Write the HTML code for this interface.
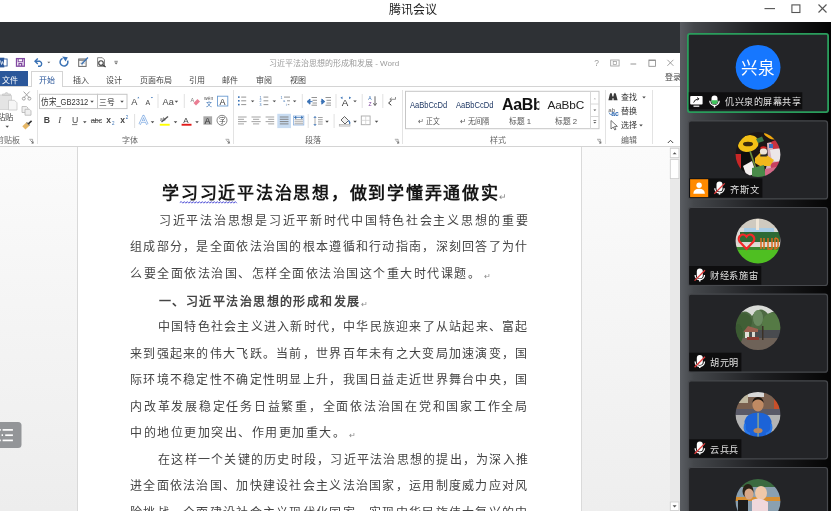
<!DOCTYPE html>
<html lang="zh-CN"><head><meta charset="utf-8">
<style>
*{margin:0;padding:0;box-sizing:border-box}
html,body{width:831px;height:511px;overflow:hidden;background:#fff;font-family:"Liberation Sans",sans-serif}
.a{position:absolute}
.t{position:absolute;white-space:nowrap;line-height:1}
svg{position:absolute;overflow:visible}
#panel{left:680px;top:22px;width:151px;height:489px;background:linear-gradient(90deg,#5a5d62 0px,#44474b 14px,#202124 75px,#050505 151px)}
.tab{font-size:8px;color:#444;top:76.5px}
.gl{font-size:8px;color:#666;top:137.2px}
.sep{position:absolute;width:1px;background:#e3e3e3}
.dd{position:absolute;width:0;height:0;border-left:2px solid transparent;border-right:2px solid transparent;border-top:2px solid #666}
.doc{position:absolute;white-space:nowrap;line-height:1;font-size:12px;color:#444}
.pil{font-size:8px;color:#888;margin-left:3px;vertical-align:-1px;letter-spacing:0}
.doc,.t,svg{will-change:transform}
</style></head><body>
<!-- Tencent title bar -->
<div class="t" style="left:389px;top:4px;font-size:12px;color:#1a1a1a">腾讯会议</div>
<svg style="left:760px;top:0" width="71" height="22">
  <line x1="4.5" y1="8.6" x2="15" y2="8.6" stroke="#555" stroke-width="1.1"/>
  <rect x="31.9" y="4.9" width="8" height="7.6" fill="none" stroke="#555" stroke-width="1.1"/>
  <line x1="58.5" y1="4.5" x2="66.5" y2="12.5" stroke="#555" stroke-width="1.1"/>
  <line x1="66.5" y1="4.5" x2="58.5" y2="12.5" stroke="#555" stroke-width="1.1"/>
</svg>
<div class="a" style="left:0;top:22px;width:680px;height:31px;background:#2e3135"></div>

<!-- ===== WORD ===== -->
<!-- QAT+RIBBON -->
<svg style="left:0;top:0" width="680" height="147" viewBox="0 0 680 147">
<g font-family="Liberation Sans">
<!-- ===== QAT ===== -->
  <!-- word logo partial -->
  <rect x="-2" y="57.7" width="6.3" height="9.7" fill="#2b579a"/>
  <rect x="3.5" y="59" width="3.6" height="7" fill="#fff" stroke="#2b579a" stroke-width="0.9"/>
  <path d="M0.5 60.5 L1.5 64.5 L2.5 61.5 L3.5 64.5" fill="none" stroke="#fff" stroke-width="0.7"/>
  <!-- save -->
  <rect x="16.5" y="58.6" width="7.8" height="7.6" fill="none" stroke="#8048a0" stroke-width="1.3"/>
  <rect x="18.2" y="58.6" width="4.4" height="3.2" fill="none" stroke="#8048a0" stroke-width="1"/>
  <rect x="18.4" y="63" width="4" height="3" fill="#8048a0"/>
  <rect x="19.6" y="64" width="1.2" height="1.6" fill="#fff"/>
  <!-- undo -->
  <path d="M35.3 61.3 H40 A2.7 2.7 0 0 1 40 66.3 H38" fill="none" stroke="#3a72b5" stroke-width="1.4"/>
  <path d="M37.8 58.4 L35 61.3 L37.8 64" fill="none" stroke="#3a72b5" stroke-width="1.4"/>
  <path d="M47.3 61.7 L50.3 61.7 L48.8 63.2Z" fill="#666"/>
  <!-- redo circular -->
  <path d="M67.6 60.6 A3.9 3.9 0 1 1 62.6 58.4" fill="none" stroke="#3a72b5" stroke-width="1.5"/>
  <path d="M62.2 56.6 L67.8 57.2 L65.6 61.6Z" fill="#3a72b5"/>
  <!-- edit -->
  <rect x="78.7" y="59" width="7.4" height="7.4" fill="none" stroke="#666" stroke-width="1"/>
  <line x1="78.7" y1="60.2" x2="86.1" y2="60.2" stroke="#666" stroke-width="1"/>
  <line x1="80" y1="63.2" x2="85" y2="63.2" stroke="#aaa" stroke-width="0.6"/>
  <line x1="82.2" y1="61" x2="82.2" y2="66" stroke="#aaa" stroke-width="0.6"/>
  <path d="M81.5 64.2 L87.9 57.5" stroke="#3a72b5" stroke-width="1.3"/>
  <!-- print preview -->
  <path d="M97.6 57.7 H102.3 L104.5 59.9 V66.4 H97.6Z" fill="none" stroke="#777" stroke-width="0.9"/>
  <circle cx="101" cy="63.1" r="2.3" fill="#fff" stroke="#444" stroke-width="1.1"/>
  <line x1="102.6" y1="64.8" x2="105.6" y2="67" stroke="#444" stroke-width="1.3"/>
  <!-- customize -->
  <line x1="114.4" y1="61.3" x2="117.8" y2="61.3" stroke="#666" stroke-width="0.8"/>
  <path d="M114.4 62.6 L117.8 62.6 L116.1 64.6Z" fill="#666"/>

<!-- ===== CLIPBOARD ===== -->
  <rect x="-2" y="95" width="13.5" height="14.5" rx="1" fill="#e4e4e4" stroke="#cfcfcf" stroke-width="0.8"/>
  <path d="M2.5 95.5 V94 H5 A1.5 1.5 0 0 1 8 94 H10.5 V95.5Z" fill="#d9d9d9" stroke="#c4c4c4" stroke-width="0.7"/>
  <path d="M8.5 100.3 H14.5 L17 102.8 V110 H8.5Z" fill="#f6f6f6" stroke="#c8c8c8" stroke-width="0.8"/>
  <text x="-3" y="120.4" font-size="8.3" fill="#444">粘贴</text>
  <path d="M5.45 125.80 L8.95 125.80 L7.20 127.75Z" fill="#4a4a4a"/>
  <!-- scissors -->
  <path d="M23.6 91.6 L29.6 98 M29.6 91.6 L23.6 98" stroke="#9a9a9a" stroke-width="0.9"/>
  <circle cx="23.8" cy="98.6" r="1.5" fill="none" stroke="#9a9a9a" stroke-width="0.9"/>
  <circle cx="29.4" cy="98.6" r="1.5" fill="none" stroke="#9a9a9a" stroke-width="0.9"/>
  <!-- copy -->
  <path d="M22 106.5 H26.5 L28 108 V112.5 H22Z" fill="#efefef" stroke="#b5b5b5" stroke-width="0.8"/>
  <path d="M25 109.3 H29.5 L31 110.8 V115.2 H25Z" fill="#efefef" stroke="#b5b5b5" stroke-width="0.8"/>
  <!-- format painter -->
  <path d="M22.3 126.3 L26.6 122.3 L29.7 125.4 L25.4 129.5Z" fill="#e6b766"/>
  <path d="M26.6 122.3 L29.7 125.4" stroke="#777" stroke-width="1.2"/>
  <path d="M28.3 123.8 L31.6 120.8" stroke="#333" stroke-width="1.6"/>
  <!-- launcher -->
  <path d="M29.3 139.3 H32.6 V142.6" fill="none" stroke="#888" stroke-width="0.7"/>
  <path d="M30.4 140.4 L33.2 143.2 M31.5 143.2 H33.2 V141.5" fill="none" stroke="#666" stroke-width="0.8"/>

<!-- ===== FONT ===== -->
  <rect x="39.5" y="94.3" width="58" height="14.3" fill="#fff" stroke="#c6c6c6" stroke-width="1"/>
  <rect x="97.5" y="94.3" width="29.5" height="14.3" fill="#fff" stroke="#c6c6c6" stroke-width="1"/>
  <text x="41.3" y="104.9" font-size="9" fill="#333" textLength="47" lengthAdjust="spacingAndGlyphs">仿宋_GB2312</text>
  <path d="M90.25 100.80 L93.75 100.80 L92.00 102.75Z" fill="#4a4a4a"/>
  <text x="99" y="105" font-size="8" fill="#222" textLength="15.5" lengthAdjust="spacingAndGlyphs">三号</text>
  <path d="M120.25 100.80 L123.75 100.80 L122.00 102.75Z" fill="#4a4a4a"/>
  <text x="131.2" y="104.7" font-size="9.2" fill="#444">A</text>
  <path d="M137.4 98.3 L139.3 98.3 L138.35 96.8Z" fill="#3a72b5"/>
  <text x="145.6" y="104.7" font-size="7" fill="#444">A</text>
  <path d="M150.8 96.9 L153 96.9 L151.9 98.3Z" fill="#3a72b5"/>
  <line x1="158" y1="94" x2="158" y2="108" stroke="#e1e1e1"/>
  <text x="162.6" y="104.7" font-size="9.2" fill="#444">Aa</text>
  <path d="M174.65 100.80 L178.15 100.80 L176.40 102.75Z" fill="#4a4a4a"/>
  <line x1="184.3" y1="94" x2="184.3" y2="108" stroke="#e1e1e1"/>
  <text x="190.5" y="101.5" font-size="5.5" fill="#777">A</text>
  <path d="M193.5 103 L197.5 99 L200 101.5 L196 105.5Z" fill="#ea7d93"/>
  <text x="204" y="100" font-size="5" fill="#555">wén</text>
  <text x="205.5" y="106" font-size="6" fill="#3a72b5">文</text>
  <rect x="217.5" y="96.2" width="10.3" height="9.8" fill="#fff" stroke="#6b9bd1" stroke-width="0.9"/>
  <text x="219.6" y="104.6" font-size="9" fill="#333">A</text>
  <!-- row2 -->
  <text x="43.8" y="123.3" font-size="8.7" font-weight="bold" fill="#444">B</text>
  <text x="58.3" y="123.3" font-size="8.7" font-style="italic" fill="#444" font-family="Liberation Serif">I</text>
  <text x="72" y="123.3" font-size="8.7" fill="#444">U</text>
  <line x1="72" y1="124.6" x2="77.3" y2="124.6" stroke="#555" stroke-width="0.8"/>
  <path d="M83.05 121.20 L86.55 121.20 L84.80 123.15Z" fill="#4a4a4a"/>
  <text x="90.8" y="123.3" font-size="7.6" fill="#444" letter-spacing="-0.4">abc</text>
  <line x1="90.8" y1="120.5" x2="101" y2="120.5" stroke="#444" stroke-width="0.6"/>
  <text x="106.3" y="123.3" font-size="8.5" font-weight="bold" fill="#444">x</text>
  <text x="112" y="125" font-size="4.5" fill="#3a72b5">2</text>
  <text x="120.2" y="123.3" font-size="8.5" font-weight="bold" fill="#444">x</text>
  <text x="125.8" y="119" font-size="4.5" fill="#3a72b5">2</text>
  <line x1="134.6" y1="114" x2="134.6" y2="128" stroke="#e1e1e1"/>
  <path d="M139.6 124.6 L143.5 116 L147.4 124.6 M141.2 121.6 H145.8" fill="none" stroke="#8db4e6" stroke-width="2.4" stroke-linejoin="round"/>
  <path d="M139.6 124.6 L143.5 116 L147.4 124.6 M141.2 121.6 H145.8" fill="none" stroke="#fff" stroke-width="0.9" stroke-linejoin="round"/>
  <path d="M150.75 121.20 L154.25 121.20 L152.50 123.15Z" fill="#4a4a4a"/>
  <path d="M161.5 122 L168 116.5" stroke="#555" stroke-width="1.3"/>
  <text x="160" y="121" font-size="5" fill="#555">ab</text>
  <rect x="159.8" y="123.8" width="9.9" height="1.9" fill="#ffff00"/>
  <path d="M173.75 121.20 L177.25 121.20 L175.50 123.15Z" fill="#4a4a4a"/>
  <text x="183.2" y="122.8" font-size="8" fill="#444">A</text>
  <rect x="181.6" y="123.8" width="9.9" height="1.9" fill="#e21a1a"/>
  <path d="M195.25 121.20 L198.75 121.20 L197.00 123.15Z" fill="#4a4a4a"/>
  <rect x="203.4" y="116.3" width="8.7" height="8.4" fill="#a8a8a8"/>
  <text x="204.5" y="124" font-size="9" fill="#333">A</text>
  <circle cx="222" cy="120.3" r="5" fill="#fff" stroke="#666" stroke-width="0.8"/>
  <text x="218.8" y="123.4" font-size="6.5" fill="#444">字</text>
  <path d="M225.5 139.3 H228.8 V142.6" fill="none" stroke="#888" stroke-width="0.7"/>
  <path d="M226.6 140.4 L229.4 143.2 M227.7 143.2 H229.4 V141.5" fill="none" stroke="#666" stroke-width="0.8"/>

<!-- ===== PARAGRAPH ===== -->
  <g fill="#3a72b5">
    <rect x="238" y="96.3" width="1.6" height="1.6"/><rect x="238" y="100" width="1.6" height="1.6"/><rect x="238" y="103.8" width="1.6" height="1.6"/>
  </g>
  <g stroke="#888" stroke-width="0.9">
    <line x1="241.2" y1="97.1" x2="246.2" y2="97.1"/><line x1="241.2" y1="100.8" x2="246.2" y2="100.8"/><line x1="241.2" y1="104.6" x2="246.2" y2="104.6"/>
    <line x1="263.5" y1="97.1" x2="268.3" y2="97.1"/><line x1="263.5" y1="100.8" x2="268.3" y2="100.8"/><line x1="263.5" y1="104.6" x2="268.3" y2="104.6"/>
    <line x1="284" y1="97.1" x2="290" y2="97.1"/><line x1="287" y1="100.8" x2="290" y2="100.8"/><line x1="287.8" y1="104.6" x2="289.3" y2="104.6"/>
  </g>
  <g fill="#3a72b5" font-size="3.6">
    <text x="259.4" y="98.6">1</text><text x="259.4" y="102.3">2</text><text x="259.4" y="106.1">3</text>
    <text x="280.5" y="98.6">1</text><text x="283.2" y="102.3">a</text><text x="285.8" y="106.1">i</text>
  </g>
  <path d="M250.85 100.40 L254.35 100.40 L252.60 102.35Z" fill="#4a4a4a"/>
  <path d="M272.55 100.40 L276.05 100.40 L274.30 102.35Z" fill="#4a4a4a"/>
  <path d="M292.85 100.40 L296.35 100.40 L294.60 102.35Z" fill="#4a4a4a"/>
  <line x1="302.3" y1="94" x2="302.3" y2="108" stroke="#e1e1e1"/>
  <!-- indents -->
  <g stroke="#888" stroke-width="0.9">
    <line x1="311.5" y1="97.5" x2="317" y2="97.5"/><line x1="312.5" y1="100.3" x2="317" y2="100.3"/><line x1="312.5" y1="103" x2="317" y2="103"/><line x1="311.5" y1="105.2" x2="317" y2="105.2"/>
    <line x1="325.5" y1="97.5" x2="331" y2="97.5"/><line x1="326.5" y1="100.3" x2="331" y2="100.3"/><line x1="326.5" y1="103" x2="331" y2="103"/><line x1="325.5" y1="105.2" x2="331" y2="105.2"/>
  </g>
  <path d="M307 101.6 L310 99 V104.2Z M309.5 101.6 H312.5" fill="#3a72b5" stroke="#3a72b5" stroke-width="0.9"/>
  <path d="M324.8 101.6 L321.8 99 V104.2Z M320.8 101.6 H323" fill="#3a72b5" stroke="#3a72b5" stroke-width="0.9"/>
  <line x1="336" y1="94" x2="336" y2="108" stroke="#e1e1e1"/>
  <text x="341.8" y="105.5" font-size="9.8" fill="#333">A</text>
  <path d="M340.4 97.8 L342.5 96.4 V99.2Z M351.2 97.8 L349.1 96.4 V99.2Z" fill="#3a72b5"/>
  <path d="M353.25 100.40 L356.75 100.40 L355.00 102.35Z" fill="#4a4a4a"/>
  <line x1="362.2" y1="94" x2="362.2" y2="108" stroke="#e1e1e1"/>
  <text x="368.2" y="100.4" font-size="5" fill="#3a72b5">A</text>
  <text x="368.4" y="105.8" font-size="5" fill="#8048a0">Z</text>
  <path d="M375 96.3 V105" stroke="#555" stroke-width="0.9"/>
  <path d="M373.4 103.2 L375 105.6 L376.6 103.2" fill="none" stroke="#555" stroke-width="0.9"/>
  <line x1="382.8" y1="94" x2="382.8" y2="108" stroke="#e1e1e1"/>
  <path d="M395.5 97 V99.3 H390" fill="none" stroke="#777" stroke-width="0.8"/>
  <path d="M391.8 97.6 L389.8 99.3 L391.8 101" fill="none" stroke="#777" stroke-width="0.8"/>
  <path d="M388.6 103 L391.3 100.5 M388.6 103 L391.3 105.3" fill="none" stroke="#333" stroke-width="1"/>
  <!-- row2 align -->
  <g stroke="#9a9a9a" stroke-width="0.9">
    <line x1="238" y1="117" x2="246.6" y2="117"/><line x1="238" y1="119.3" x2="244" y2="119.3"/><line x1="238" y1="121.6" x2="246.6" y2="121.6"/><line x1="238" y1="123.9" x2="244" y2="123.9"/>
    <line x1="251.5" y1="117" x2="260.7" y2="117"/><line x1="253" y1="119.3" x2="259.2" y2="119.3"/><line x1="251.5" y1="121.6" x2="260.7" y2="121.6"/><line x1="253" y1="123.9" x2="259.2" y2="123.9"/>
    <line x1="265.6" y1="117" x2="274.2" y2="117"/><line x1="268.2" y1="119.3" x2="274.2" y2="119.3"/><line x1="265.6" y1="121.6" x2="274.2" y2="121.6"/><line x1="268.2" y1="123.9" x2="274.2" y2="123.9"/>
  </g>
  <rect x="277.3" y="113.8" width="13.7" height="14.3" fill="#c8dcf2"/>
  <g stroke="#7a7a7a" stroke-width="0.9">
    <line x1="279.8" y1="117" x2="288.5" y2="117"/><line x1="279.8" y1="119.3" x2="288.5" y2="119.3"/><line x1="279.8" y1="121.6" x2="288.5" y2="121.6"/><line x1="279.8" y1="123.9" x2="288.5" y2="123.9"/>
  </g>
  <rect x="293.5" y="116" width="10.3" height="9" fill="none" stroke="#8ab0de" stroke-width="0.8"/>
  <g stroke="#999" stroke-width="0.9">
    <line x1="294.5" y1="119.8" x2="303" y2="119.8"/><line x1="294.5" y1="121.8" x2="303" y2="121.8"/><line x1="294.5" y1="123.8" x2="303" y2="123.8"/>
  </g>
  <path d="M294.5 117.5 H303 M294.5 117.5 L296 116.3 V118.7Z M303 117.5 L301.5 116.3 V118.7Z" fill="#3a72b5" stroke="#3a72b5" stroke-width="0.7"/>
  <line x1="308.2" y1="114" x2="308.2" y2="128" stroke="#e1e1e1"/>
  <!-- line spacing -->
  <path d="M315 117.5 V124.5" stroke="#999" stroke-width="0.8"/>
  <path d="M313.3 117.8 L315 115.9 L316.7 117.8Z M313.3 124.2 L315 126.1 L316.7 124.2Z" fill="#3a72b5"/>
  <g stroke="#999" stroke-width="0.9"><line x1="318" y1="117.5" x2="322.7" y2="117.5"/><line x1="318" y1="119.7" x2="322.7" y2="119.7"/><line x1="318" y1="121.9" x2="322.7" y2="121.9"/><line x1="318" y1="124.1" x2="322.7" y2="124.1"/></g>
  <path d="M325.25 120.80 L328.75 120.80 L327.00 122.75Z" fill="#4a4a4a"/>
  <line x1="334.1" y1="114" x2="334.1" y2="128" stroke="#e1e1e1"/>
  <!-- shading -->
  <path d="M341 120 L344.5 116.5 L348.5 120.5 L345 124 Z" fill="#f2f2f2" stroke="#555" stroke-width="0.9"/>
  <path d="M348.5 120.5 Q350.5 122.5 349.5 124" fill="none" stroke="#3a72b5" stroke-width="1.2"/>
  <rect x="339.2" y="124.3" width="10.8" height="1.8" fill="#e8e8e8" stroke="#999" stroke-width="0.5"/>
  <path d="M353.25 120.80 L356.75 120.80 L355.00 122.75Z" fill="#4a4a4a"/>
  <rect x="361.3" y="116" width="8.8" height="8.7" fill="none" stroke="#aaa" stroke-width="0.9"/>
  <path d="M365.7 116 V124.7 M361.3 120.35 H370.1" stroke="#ccc" stroke-width="0.7"/>
  <path d="M374.75 120.80 L378.25 120.80 L376.50 122.75Z" fill="#4a4a4a"/>
  <path d="M394.8 139.3 H398.1 V142.6" fill="none" stroke="#888" stroke-width="0.7"/>
  <path d="M395.9 140.4 L398.7 143.2 M397 143.2 H398.7 V141.5" fill="none" stroke="#666" stroke-width="0.8"/>

<!-- ===== STYLES ===== -->
  <rect x="405.5" y="91.3" width="193.5" height="37.4" fill="#fff" stroke="#c6c6c6" stroke-width="1"/>
  <line x1="590.5" y1="91.3" x2="590.5" y2="128.7" stroke="#d8d8d8"/>
  <line x1="590.5" y1="104" x2="599" y2="104" stroke="#d8d8d8"/>
  <line x1="590.5" y1="116.5" x2="599" y2="116.5" stroke="#d8d8d8"/>
  <path d="M593.7 99.2 L596 99.2 L594.85 97.9Z" fill="#aaa"/>
  <path d="M593.4 109.5 L596.3 109.5 L594.85 111Z" fill="#555"/>
  <line x1="593.4" y1="120.5" x2="596.3" y2="120.5" stroke="#555" stroke-width="0.7"/>
  <path d="M593.4 122 L596.3 122 L594.85 123.5Z" fill="#555"/>
  <text x="410" y="107.7" font-size="8.6" fill="#1f3864" textLength="37.2" lengthAdjust="spacingAndGlyphs">AaBbCcDd</text>
  <text x="455.9" y="107.7" font-size="8.6" fill="#1f3864" textLength="37.5" lengthAdjust="spacingAndGlyphs">AaBbCcDd</text>
  <text x="502" y="109.5" font-size="16" font-weight="bold" fill="#111" letter-spacing="-0.3">AaBb</text>
  <rect x="539.3" y="95" width="6" height="16" fill="#fff"/>
  <text x="547.6" y="109.3" font-size="11.8" fill="#222" letter-spacing="-0.2">AaBbC</text>
  <text x="418" y="123.5" font-size="8" fill="#555" textLength="21.5" lengthAdjust="spacingAndGlyphs">↵ 正文</text>
  <text x="459.7" y="123.5" font-size="8" fill="#555" textLength="30" lengthAdjust="spacingAndGlyphs">↵ 无间隔</text>
  <text x="509" y="123.5" font-size="8" fill="#555" textLength="22" lengthAdjust="spacingAndGlyphs">标题 1</text>
  <text x="555" y="123.5" font-size="8" fill="#555" textLength="22" lengthAdjust="spacingAndGlyphs">标题 2</text>
  <path d="M597 139.3 H600.3 V142.6" fill="none" stroke="#888" stroke-width="0.7"/>
  <path d="M598.1 140.4 L600.9 143.2 M599.2 143.2 H600.9 V141.5" fill="none" stroke="#666" stroke-width="0.8"/>

<!-- ===== EDITING ===== -->
  <path d="M608.4 100.3 L609.6 95 L610.2 93.3 H611.8 L612.4 96.5 H613.4 L614 93.3 H615.6 L616.2 95 L617.6 100.3 H613.6 V98.2 H612.4 V100.3Z" fill="#3a3a3a"/>
  <text x="621" y="100.4" font-size="8" fill="#333">查找</text>
  <path d="M642.25 96.60 L645.75 96.60 L644.00 98.55Z" fill="#4a4a4a"/>
  <text x="608.2" y="111.5" font-size="6.2" fill="#555">ab</text>
  <text x="611.2" y="116" font-size="6.8" fill="#2f68b0" font-weight="bold">ac</text>
  <path d="M609 112.5 Q609.5 115 611.5 114.5" fill="none" stroke="#3a72b5" stroke-width="0.7"/>
  <text x="621" y="114.2" font-size="8" fill="#333">替换</text>
  <path d="M611 120.5 V129 L613.2 127 L614.8 130 L616 129.3 L614.5 126.5 L617.4 126.4Z" fill="#fff" stroke="#555" stroke-width="0.8"/>
  <text x="621" y="128.2" font-size="8" fill="#333">选择</text>
  <path d="M639.25 124.60 L642.75 124.60 L641.00 126.55Z" fill="#4a4a4a"/>
  <path d="M667.8 143 L670.5 140.3 L673.2 143" fill="none" stroke="#444" stroke-width="1"/>
</g>
</svg>

<div class="t" style="left:268.8px;top:59.5px;font-size:8px;color:#9a9a9a">习近平法治思想的形成和发展 - Word</div>
<!-- word window controls -->
<svg style="left:590px;top:55px" width="90" height="14">
  <text x="4.2" y="10.9" font-size="8.5" font-family="Liberation Sans" fill="#999">?</text>
  <rect x="20.7" y="5" width="8.4" height="6" fill="none" stroke="#999" stroke-width="0.8"/>
  <rect x="23.2" y="6.6" width="3.4" height="3" fill="none" stroke="#999" stroke-width="0.7"/>
  <line x1="40.5" y1="9" x2="46.2" y2="9" stroke="#888" stroke-width="0.9"/>
  <rect x="58.9" y="5" width="6.5" height="6.3" fill="none" stroke="#888" stroke-width="0.8"/>
  <line x1="58.9" y1="5.4" x2="65.4" y2="5.4" stroke="#888" stroke-width="0.9"/>
  <path d="M77.4 4.8 L83.4 10.8 M83.4 4.8 L77.4 10.8" stroke="#888" stroke-width="0.8"/>
</svg>
<div class="t" style="left:665px;top:73.8px;font-size:8px;color:#444">登录</div>

<!-- tabs -->
<div class="a" style="left:0;top:71px;width:28px;height:16px;background:#2b579a"></div>
<div class="t tab" style="left:2px;color:#fff">文件</div>
<div class="a" style="left:31px;top:71px;width:32px;height:16px;border:1px solid #d4d4d4;border-bottom:none;background:#fff"></div>
<div class="t tab" style="left:38.5px;color:#2b579a">开始</div>
<div class="t tab" style="left:72.5px">插入</div>
<div class="t tab" style="left:106px">设计</div>
<div class="t tab" style="left:140px">页面布局</div>
<div class="t tab" style="left:188.5px">引用</div>
<div class="t tab" style="left:222px">邮件</div>
<div class="t tab" style="left:256px">审阅</div>
<div class="t tab" style="left:290px">视图</div>
<div class="a" style="left:0;top:86px;width:31px;height:1px;background:#d4d4d4"></div>
<div class="a" style="left:63px;top:86px;width:617px;height:1px;background:#d4d4d4"></div>

<!-- ribbon bottom -->
<div class="a" style="left:0;top:146px;width:680px;height:1px;background:#d4d4d4"></div>
<div class="sep" style="left:37px;top:90px;height:54px"></div>
<div class="sep" style="left:232.5px;top:90px;height:54px"></div>
<div class="sep" style="left:402px;top:90px;height:54px"></div>
<div class="sep" style="left:604.5px;top:90px;height:54px"></div>
<div class="sep" style="left:651.5px;top:90px;height:54px"></div>
<div class="t gl" style="left:-4px">剪贴板</div>
<div class="t gl" style="left:121.5px">字体</div>
<div class="t gl" style="left:304.5px">段落</div>
<div class="t gl" style="left:490px">样式</div>
<div class="t gl" style="left:620.5px">编辑</div>

<!-- document area -->
<div class="a" style="left:0;top:147px;width:77px;height:364px;background:linear-gradient(180deg,#fbfbfb,#ededed)"></div>
<div class="a" style="left:77px;top:147px;width:1px;height:364px;background:#d9d9d9"></div>
<div class="a" style="left:581px;top:147px;width:89px;height:364px;background:linear-gradient(180deg,#fbfbfb,#eeeeee);border-left:1px solid #dadada"></div>
<div class="a" style="left:670px;top:147px;width:10px;height:364px;background:#e9e9e9"></div>
<svg style="left:0;top:0" width="680" height="511" viewBox="0 0 680 511">
  <rect x="670.3" y="148.3" width="8.6" height="9.3" fill="#fff" stroke="#cdcdcd" stroke-width="0.8"/>
  <path d="M672.6 154.3 L676.6 154.3 L674.6 152.2Z" fill="#555"/>
  <rect x="670.3" y="159.6" width="8.6" height="19" fill="#fff" stroke="#cdcdcd" stroke-width="0.8"/>
  <rect x="670.3" y="502" width="8.6" height="8.5" fill="#fff" stroke="#cdcdcd" stroke-width="0.8"/>
  <path d="M672.6 505.3 L676.6 505.3 L674.6 507.4Z" fill="#555"/>
  <rect x="-4" y="422" width="25.5" height="26" rx="3.5" fill="#939598"/>
  <g stroke="#fff" stroke-width="1.7">
    <line x1="2.6" y1="429.9" x2="12.9" y2="429.9"/><line x1="5.2" y1="435.2" x2="12.9" y2="435.2"/><line x1="2.6" y1="440.4" x2="12.9" y2="440.4"/>
    <line x1="-1" y1="429.9" x2="0.8" y2="429.9"/><line x1="1.6" y1="435.2" x2="3" y2="435.2"/><line x1="-1" y1="440.4" x2="0.8" y2="440.4"/>
  </g>
</svg>

<div class="doc" style="left:161.6px;top:185px;font-size:17px;font-weight:bold;color:#151515;letter-spacing:1.75px">学习习近平法治思想，做到学懂弄通做实<span class="pil" style="font-size:9px;font-weight:normal;letter-spacing:0;margin-left:-1px">↵</span></div>
<svg style="left:178px;top:200px" width="60" height="5"><path d="M1.8 2.5 L3.3 1.6 L4.8 3.2 L6.3 1.6 L7.8 3.2 L9.3 1.6 L10.8 3.2 L12.3 1.6 L13.8 3.2 L15.3 1.6 L16.8 3.2 L18.3 1.6 L19.8 3.2 L21.3 1.6 L22.8 3.2 L24.3 1.6 L25.8 3.2 L27.3 1.6 L28.8 3.2 L30.3 1.6 L31.8 3.2 L33.3 1.6 L34.8 3.2 L36.3 1.6 L37.8 3.2 L39.3 1.6 L40.8 3.2 L42.3 1.6 L43.8 3.2 L45.3 1.6 L46.8 3.2 L48.3 1.6 L49.8 3.2 L51.3 1.6 L52.8 3.2 L54.3 1.6 L55.8 3.2 L57.3 1.6 L58.8 3.2" fill="none" stroke="#4646d2" stroke-width="0.9"/></svg>
<div class="doc" style="left:159px;top:296.3px;font-weight:bold;color:#454545;letter-spacing:1.45px">一、习近平法治思想的形成和发展<span class="pil" style="margin-left:0;font-weight:normal">↵</span></div>
<!--DOC-->
<div class="doc" style="left:158.80px;top:214.90px;letter-spacing:1.723px">习近平法治思想是习近平新时代中国特色社会主义思想的重要</div>
<div class="doc" style="left:130.40px;top:241.40px;letter-spacing:1.283px">组成部分，是全面依法治国的根本遵循和行动指南，深刻回答了为什</div>
<div class="doc" style="left:130.40px;top:267.90px;letter-spacing:1.500px">么要全面依法治国、怎样全面依法治国这个重大时代课题。<span class="pil">↵</span></div>
<div class="doc" style="left:158.40px;top:321.00px;letter-spacing:1.230px">中国特色社会主义进入新时代，中华民族迎来了从站起来、富起</div>
<div class="doc" style="left:130.40px;top:347.50px;letter-spacing:1.283px">来到强起来的伟大飞跃。当前，世界百年未有之大变局加速演变，国</div>
<div class="doc" style="left:130.40px;top:374.00px;letter-spacing:1.283px">际环境不稳定性不确定性明显上升，我国日益走近世界舞台中央，国</div>
<div class="doc" style="left:130.40px;top:400.50px;letter-spacing:1.757px">内改革发展稳定任务日益繁重，全面依法治国在党和国家工作全局</div>
<div class="doc" style="left:130.40px;top:427.00px;letter-spacing:1.500px">中的地位更加突出、作用更加重大。<span class="pil">↵</span></div>
<div class="doc" style="left:157.80px;top:453.60px;letter-spacing:1.252px">在这样一个关键的历史时段，习近平法治思想的提出，为深入推</div>
<div class="doc" style="left:130.40px;top:480.10px;letter-spacing:1.283px">进全面依法治国、加快建设社会主义法治国家，运用制度威力应对风</div>
<div class="doc" style="left:130.40px;top:506.60px;letter-spacing:1.283px">险挑战，全面建设社会主义现代化国家，实现中华民族伟大复兴的中</div>
<!--/DOC-->

<!--PANEL-->
<!-- ===== RIGHT PANEL ===== -->
<div id="panel" class="a"></div>
<svg style="left:680px;top:22px" width="151" height="489" viewBox="680 22 151 489">
<defs>
  <filter id="blur" x="-10%" y="-10%" width="120%" height="120%"><feGaussianBlur stdDeviation="0.7"/></filter>
  <clipPath id="c2"><circle cx="758" cy="154.5" r="22.4"/></clipPath>
  <clipPath id="c3"><circle cx="758" cy="241" r="22.4"/></clipPath>
  <clipPath id="c4"><circle cx="758" cy="327.7" r="22.4"/></clipPath>
  <clipPath id="c5"><circle cx="758" cy="414.3" r="22.4"/></clipPath>
  <clipPath id="c6"><circle cx="758" cy="501.5" r="22.4"/></clipPath>
  <g id="mute">
    <path d="M-3 -3.6 A3 3 0 0 1 3 -3.6 V0.4 A3 3 0 0 1 -3 0.4Z" fill="#fff"/>
    <path d="M-4.7 0 A4.7 4.7 0 0 0 4.7 0" fill="none" stroke="#fff" stroke-width="1.3"/>
    <path d="M0 4.6 V6.4" stroke="#fff" stroke-width="1.5"/>
    <path d="M-5.2 5.6 L5.2 -4.8" stroke="#e03c3c" stroke-width="1.3"/>
  </g>
</defs>
<!-- tile1 -->
<rect x="687.9" y="33.9" width="140.2" height="78.2" rx="2" fill="#232427" stroke="#2a9d5c" stroke-width="1.8"/>
<circle cx="758.1" cy="67.3" r="22.4" fill="#1677ff"/>
<text x="758.1" y="74.1" font-size="16.5" fill="#fff" text-anchor="middle" font-family="Liberation Sans">兴泉</text>
<rect x="688.8" y="92.3" width="113.5" height="17" fill="#0e0e0f"/>
<rect x="690.2" y="96.1" width="12.4" height="8.4" rx="1" fill="#fff"/>
<path d="M693.5 106.2 H699.3" stroke="#fff" stroke-width="1.2"/>
<path d="M693.6 102.6 Q694.5 99.3 698.6 98.8 M697 97.6 L698.9 98.8 L697.4 100.4" fill="none" stroke="#222" stroke-width="1"/>
<path d="M711.5 98.4 A3 3 0 0 1 717.5 98.4 V101.2 A3 3 0 0 1 711.5 101.2Z" fill="#fff"/>
<path d="M711.5 100.2 H717.5 V101.2 A3 3 0 0 1 711.5 101.2Z" fill="#3ec25b"/>
<path d="M709.8 100.8 A4.7 4.7 0 0 0 719.2 100.8" fill="none" stroke="#fff" stroke-width="1.3"/>
<path d="M714.5 105.4 V107.6" stroke="#fff" stroke-width="1.5"/>
<text x="725" y="104.8" font-size="9.5" fill="#e4e4e4" font-family="Liberation Sans" textLength="76.5" lengthAdjust="spacingAndGlyphs">仉兴泉的屏幕共享</text>

<!-- tiles 2-6 frames -->
<rect x="688.5" y="120.9" width="139" height="78" rx="2.5" fill="#232427" stroke="#47494d" stroke-width="1.2"/>
<rect x="688.5" y="207.5" width="139" height="78" rx="2.5" fill="#232427" stroke="#47494d" stroke-width="1.2"/>
<rect x="688.5" y="294.2" width="139" height="78" rx="2.5" fill="#232427" stroke="#47494d" stroke-width="1.2"/>
<rect x="688.5" y="380.8" width="139" height="78" rx="2.5" fill="#232427" stroke="#47494d" stroke-width="1.2"/>
<rect x="688.5" y="467.5" width="139" height="78" rx="2.5" fill="#232427" stroke="#47494d" stroke-width="1.2"/>

<!-- avatar 2: sunflowers -->
<g clip-path="url(#c2)"><g filter="url(#blur)">
  <rect x="734" y="131" width="48" height="48" fill="#1e1616"/>
  <path d="M767 143 L782 140 L782 176 L764 176 L768 160Z" fill="#d8b4bc"/>
  <path d="M770 150 L782 148 L782 162 L772 161Z" fill="#ece6e8"/>
  <path d="M771 142 L782 137 L782 148 L773 149Z" fill="#c83040"/>
  <rect x="769" y="144" width="4" height="4" fill="#3a70c0"/>
  <path d="M770 163 L782 161 L782 172 L772 173Z" fill="#c84060"/>
  <rect x="734" y="154" width="7" height="15" fill="#c82828"/>
  <rect x="741" y="152" width="9" height="19" fill="#100c0c"/>
  <path d="M738 146 Q739 136 750 135 Q760 136 758 146 Q754 152 746 152 Q739 151 738 146Z" fill="#f2c014"/>
  <ellipse cx="748" cy="144" rx="5" ry="2.3" fill="#3a2a0a"/>
  <ellipse cx="770" cy="136" rx="6.5" ry="2.4" fill="#f0a810" transform="rotate(25 770 136)"/>
  <path d="M755 158 L760 153 L768 156 L774 160 L770 166 L760 166 L755 163Z" fill="#f2b81a"/>
  <circle cx="763.5" cy="151.5" r="3.6" fill="#ede4d8"/>
  <path d="M759.8 148.5 A3.8 3 0 0 1 767.2 148.5Z" fill="#d82020"/>
  <rect x="760.3" y="154.5" width="6.5" height="2" fill="#2a2a2a"/>
  <path d="M750 151 L756 169" stroke="#6a9040" stroke-width="1.6"/>
  <path d="M756 139 L762 136.5 L764 141 L758 143Z" fill="#3d7a4a"/>
  <path d="M743 166 L752 161 L756 173 L747 177Z" fill="#f4f0f0"/>
  <path d="M752 168 L764 165 L766 179 L752 179Z" fill="#4a8a48"/>
  <path d="M765 169 L776 167 L778 179 L765 179Z" fill="#d46a88"/>
</g></g>

<!-- avatar 3: campus with heart -->
<g clip-path="url(#c3)"><g filter="url(#blur)">
  <rect x="735" y="218" width="46" height="46" fill="#d9d9d4"/>
  <rect x="735" y="218" width="46" height="10" fill="#cfcac0"/>
  <rect x="744" y="228" width="30" height="6" fill="#a8cde8"/>
  <rect x="756" y="219" width="3" height="11" fill="#efe6d8"/>
  <rect x="740" y="232" width="40" height="10" fill="#2f6a35"/>
  <rect x="735" y="244" width="46" height="5" fill="#e2ddd5"/>
  <rect x="735" y="249" width="46" height="16" fill="#4fbf24"/>
  <rect x="735" y="247" width="46" height="3" fill="#3c8a30"/>
  <path d="M746.5 249 L739.5 241.5 A3.8 3.8 0 0 1 746.5 236.5 A3.8 3.8 0 0 1 753.5 241.5Z" fill="none" stroke="#f22a2a" stroke-width="2.2"/>
  <path d="M761 238 V249 M764 238 V249 M768 238 V249 H772 M772 238 V249 M775 238 V249 Q779 248 778 243 Q779 238 775 238" fill="none" stroke="#d96a1c" stroke-width="1.5"/>
</g></g>

<!-- avatar 4: trees/house -->
<g clip-path="url(#c4)"><g filter="url(#blur)">
  <rect x="734" y="304" width="48" height="48" fill="#4a5a44"/>
  <rect x="734" y="304" width="48" height="14" fill="#dadcd8"/>
  <path d="M734 318 Q745 306 752 316 Q760 304 768 314 Q776 308 782 316 V352 H734Z" fill="#4d6a42"/>
  <ellipse cx="744" cy="322" rx="8" ry="9" fill="#3f5e36"/>
  <ellipse cx="772" cy="324" rx="10" ry="11" fill="#557a45"/>
  <ellipse cx="758" cy="318" rx="5" ry="8" fill="#6a8a60"/>
  <rect x="750" y="330" width="30" height="8" fill="#4a4c50"/>
  <path d="M744 331 L748 326 L758 329 V332 H744Z" fill="#9a6050"/>
  <rect x="745" y="332" width="4" height="6" fill="#e0e0d8"/>
  <rect x="752" y="332" width="3" height="6" fill="#d8d8d0"/>
  <rect x="734" y="338" width="48" height="14" fill="#6e6258"/>
  <rect x="747" y="337" width="12" height="3" fill="#8a3a30"/>
  <ellipse cx="738" cy="334" rx="5" ry="10" fill="#3a5a30"/>
  <rect x="762" y="326" width="1.5" height="14" fill="#3a3028"/>
</g></g>

<!-- avatar 5: child -->
<g clip-path="url(#c5)"><g filter="url(#blur)">
  <rect x="734" y="391" width="48" height="48" fill="#a8a8a8"/>
  <rect x="734" y="391" width="48" height="18" fill="#7a6050"/>
  <rect x="734" y="391" width="14" height="12" fill="#c0b8a0"/>
  <rect x="748" y="391" width="16" height="6" fill="#d8d8d8"/>
  <rect x="774" y="398" width="5" height="16" fill="#c8502a"/>
  <rect x="734" y="409" width="48" height="6" fill="#5a5a68"/>
  <rect x="734" y="415" width="48" height="24" fill="#b4b4b4"/>
  <path d="M745 438 L744.5 421 Q746 413 758 412.5 Q770 413 771.5 421 L771 438Z" fill="#1c64d8"/>
  <path d="M745 424 Q743 432 750 434 M771 424 Q773 432 766 434" fill="none" stroke="#2a78e8" stroke-width="2"/>
  <ellipse cx="758" cy="405" rx="5.6" ry="6.5" fill="#c08a64"/>
  <path d="M752.2 403 Q753 397 758 397 Q763 397 763.8 403 Q762 399.5 758 399.5 Q754 399.5 752.2 403Z" fill="#1c1410"/>
  <rect x="757.6" y="413" width="0.9" height="25" fill="#d0c860"/>
  <ellipse cx="758" cy="430.5" rx="4.5" ry="2.6" fill="#b8885e"/>
</g></g>

<!-- avatar 6: woman & baby -->
<g clip-path="url(#c6)"><g filter="url(#blur)">
  <rect x="735" y="479" width="46" height="46" fill="#8aa0b0"/>
  <rect x="735" y="479" width="46" height="8" fill="#3a6a40"/>
  <rect x="735" y="497" width="46" height="4" fill="#d89030"/>
  <ellipse cx="748" cy="491" rx="5.5" ry="7" fill="#2a2018"/>
  <ellipse cx="749" cy="494" rx="4.5" ry="5.5" fill="#d8a888"/>
  <rect x="738" y="500" width="10" height="12" fill="#1a1a1a"/>
  <ellipse cx="761" cy="493" rx="6" ry="7" fill="#f0c8a8"/>
  <path d="M752 500 Q760 496 768 502 L768 512 H752Z" fill="#f0d8dc"/>
</g></g>

<!-- label bars -->
<rect x="689.2" y="178.4" width="73.2" height="19.2" fill="#0e0e0f"/>
<rect x="690.1" y="179.2" width="18.1" height="17.9" fill="#ff8a00"/>
<circle cx="699.1" cy="185.3" r="2.7" fill="#fff"/>
<path d="M693.3 193.8 Q693.6 188.8 699.1 188.8 Q704.6 188.8 704.9 193.8Z" fill="#fff"/>
<use href="#mute" x="719.5" y="188.2"/>
<text x="730.2" y="192.8" font-size="9.6" fill="#e0e0e0" font-family="Liberation Sans" textLength="29" lengthAdjust="spacingAndGlyphs">齐斯文</text>

<rect x="689.2" y="266" width="72.1" height="18.7" fill="#0e0e0f"/>
<use href="#mute" x="699.8" y="275"/>
<text x="710.3" y="279.4" font-size="9.6" fill="#e0e0e0" font-family="Liberation Sans" textLength="47.8" lengthAdjust="spacingAndGlyphs">财经系施宙</text>

<rect x="689.2" y="352.7" width="52.2" height="18.5" fill="#0e0e0f"/>
<use href="#mute" x="699.8" y="361.6"/>
<text x="710.3" y="366.3" font-size="9.6" fill="#e0e0e0" font-family="Liberation Sans" textLength="28.6" lengthAdjust="spacingAndGlyphs">胡元明</text>

<rect x="689.2" y="439.3" width="52.2" height="18.5" fill="#0e0e0f"/>
<use href="#mute" x="699.8" y="448.2"/>
<text x="710.3" y="452.8" font-size="9.6" fill="#e0e0e0" font-family="Liberation Sans" textLength="28.6" lengthAdjust="spacingAndGlyphs">云兵兵</text>
</svg>

<!--/PANEL-->
</body></html>
